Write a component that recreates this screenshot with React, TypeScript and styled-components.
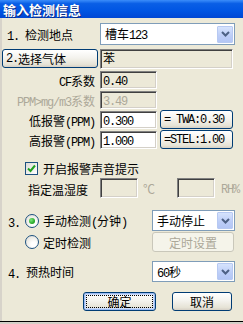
import React from 'react';
import styled, { createGlobalStyle, css } from 'styled-components';

const GlobalStyle = createGlobalStyle`
  html, body {
    margin: 0;
    padding: 0;
    background: #d4d0c8;
  }
  body {
    font-family: "Noto Sans CJK SC", "DejaVu Sans", sans-serif;
    font-size: 12px;
    color: #000;
  }
`;

// half-width latin runs, roughly SimSun metrics (6px advance)
const L = styled.span`
  font-family: "Liberation Mono", "DejaVu Sans Mono", monospace;
  font-size: 12px;
  letter-spacing: -1.2px;
`;

const Window = styled.div`
  width: 243px;
  height: 321px;
  background: #ece9d8;
  border-bottom: 1px solid #000;
  display: flex;
  flex-direction: column;
  overflow: hidden;
`;

const TitleBar = styled.div`
  height: 18px;
  flex: none;
  display: flex;
  align-items: center;
  padding-left: 3px;
  background: linear-gradient(#3b8dfa 0%, #0a5fe6 20%, #0055e3 60%, #0047d4 100%);
  color: #fff;
  font-weight: bold;
  font-size: 13px;
  text-shadow: 1px 1px 0 #0a2a84;
`;

const Body = styled.div`
  flex: 1;
  border-left: 2px solid #d7d3ca;
  display: flex;
  flex-direction: column;
`;

const Row = styled.div<{ $h: number; $mt: number }>`
  display: flex;
  align-items: center;
  height: ${(p) => p.$h}px;
  margin-top: ${(p) => p.$mt}px;
  flex: none;
`;

const Label = styled.div<{ $w?: number; $right?: boolean; $pl?: number; $disabled?: boolean }>`
  width: ${(p) => (p.$w ? `${p.$w}px` : 'auto')};
  flex: none;
  box-sizing: border-box;
  padding-left: ${(p) => p.$pl ?? 0}px;
  padding-right: ${(p) => (p.$right ? 5 : 0)}px;
  text-align: ${(p) => (p.$right ? 'right' : 'left')};
  white-space: nowrap;
  color: ${(p) => (p.$disabled ? '#aca899' : '#000')};
  padding-top: 2px;
`;

const Field = styled.div<{ $w: number; $h?: number; $white?: boolean; $disabled?: boolean; $ml?: number }>`
  width: ${(p) => p.$w}px;
  height: ${(p) => p.$h ?? 18}px;
  margin-left: ${(p) => p.$ml ?? 0}px;
  box-sizing: border-box;
  flex: none;
  border: 1px solid;
  border-color: #808080 #fff #fff #808080;
  box-shadow: inset 1px 1px 0 #404040, inset -1px -1px 0 #d4d0c8;
  background: ${(p) => (p.$white ? '#fff' : '#ece9d8')};
  color: ${(p) => (p.$disabled ? '#aca899' : '#000')};
  padding: 0 2px 0 2px;
  line-height: 15px;
  white-space: nowrap;
  overflow: hidden;
`;

const ComboBox = styled.div<{ $w: number; $h: number }>`
  width: ${(p) => p.$w}px;
  height: ${(p) => p.$h}px;
  box-sizing: border-box;
  flex: none;
  display: flex;
  align-items: center;
  border: 1px solid #7f9db9;
  background: #fff;
  padding: 1px;
`;

const ComboText = styled.div`
  flex: 1;
  padding-left: 3px;
  white-space: nowrap;
  overflow: hidden;
`;

const DropButton = styled.div`
  width: 16px;
  height: 100%;
  max-height: 17px;
  box-sizing: border-box;
  flex: none;
  display: flex;
  align-items: center;
  justify-content: center;
  border: 1px solid #b7c9f2;
  border-radius: 1px;
  background: linear-gradient(#d6e3fd, #bccdf7 60%, #b3c6f5);
`;

const xpButton = css`
  box-sizing: border-box;
  flex: none;
  border: 1px solid #003c74;
  border-radius: 3px;
  background: linear-gradient(#ffffff 0%, #f4f3ee 45%, #e6e3d6 85%, #d6d0c5 100%);
`;

const PushButton = styled.div<{ $w: number; $h: number; $left?: boolean; $disabled?: boolean; $def?: boolean; $ml?: number }>`
  ${xpButton};
  position: relative;
  width: ${(p) => p.$w}px;
  height: ${(p) => p.$h}px;
  margin-left: ${(p) => p.$ml ?? 0}px;
  display: flex;
  align-items: center;
  justify-content: ${(p) => (p.$left ? 'flex-start' : 'center')};
  padding-left: ${(p) => (p.$left ? 3 : 0)}px;
  white-space: nowrap;
  ${(p) =>
    p.$disabled &&
    css`
      border-color: #c9c7ba;
      background: #f5f4ea;
      color: #aca899;
    `}
  ${(p) =>
    p.$def &&
    css`
      box-shadow: inset 0 0 0 1px #9dbcf3, inset 0 0 0 2px #cddcf9;
      &::after {
        content: '';
        position: absolute;
        inset: 2px;
        border: 1px dotted #000;
      }
    `}
`;

const CheckBox = styled.div<{ $ml: number }>`
  width: 13px;
  height: 13px;
  box-sizing: border-box;
  flex: none;
  margin-left: ${(p) => p.$ml}px;
  border: 1px solid #1c5180;
  background: linear-gradient(135deg, #dcdcd7, #fff);
  display: flex;
  align-items: center;
  justify-content: center;
`;

const Radio = styled.div<{ $checked?: boolean }>`
  width: 14px;
  height: 14px;
  box-sizing: border-box;
  flex: none;
  border: 1px solid #1c5180;
  border-radius: 50%;
  background: radial-gradient(circle at 65% 70%, #fff 20%, #dcdad0 100%);
  display: flex;
  align-items: center;
  justify-content: center;
  &::after {
    content: '';
    display: ${(p) => (p.$checked ? 'block' : 'none')};
    width: 6px;
    height: 6px;
    border-radius: 50%;
    background: radial-gradient(circle at 35% 35%, #7be87b, #21a121 70%);
  }
`;

const Text = styled.span<{ $ml?: number; $disabled?: boolean }>`
  margin-left: ${(p) => p.$ml ?? 0}px;
  white-space: nowrap;
  color: ${(p) => (p.$disabled ? '#aca899' : '#000')};
`;

const LeftCell = styled.div<{ $w: number }>`
  width: ${(p) => p.$w}px;
  flex: none;
  display: flex;
  align-items: center;
`;

const Chevron = () => (
  <svg width="9" height="6" viewBox="0 0 9 6">
    <path d="M1 1 L4.5 4.5 L8 1" fill="none" stroke="#4d6185" strokeWidth="2" />
  </svg>
);

const Check = () => (
  <svg width="9" height="9" viewBox="0 0 9 9">
    <path d="M1 4.5 L3.5 7 L8 1.5" fill="none" stroke="#21a121" strokeWidth="2" />
  </svg>
);

const Combo: React.FC<{ w: number; h: number; children: React.ReactNode }> = ({ w, h, children }) => (
  <ComboBox $w={w} $h={h}>
    <ComboText>{children}</ComboText>
    <DropButton>
      <Chevron />
    </DropButton>
  </ComboBox>
);

export default function App() {
  return (
    <>
      <GlobalStyle />
      <Window>
        <TitleBar>输入检测信息</TitleBar>
        <Body>
          <Row $h={22} $mt={5}>
            <Label $w={98} $pl={5}><L>1. </L>检测地点</Label>
            <Combo w={135} h={22}>槽车<L>123</L></Combo>
          </Row>
          <Row $h={19} $mt={4}>
            <PushButton $w={96} $h={19} $left><L>2. </L>选择气体</PushButton>
            <Field $w={133} $h={20} $ml={2}>苯</Field>
          </Row>
          <Row $h={18} $mt={3}>
            <Label $w={98} $right><L>CF</L>系数</Label>
            <Field $w={57}><L>0.40</L></Field>
          </Row>
          <Row $h={18} $mt={2}>
            <Label $w={98} $right $disabled><L>PPM&gt;mg/m3</L>系数</Label>
            <Field $w={57} $disabled><L>3.49</L></Field>
          </Row>
          <Row $h={19} $mt={1}>
            <Label $w={98} $right>低报警<L>(PPM)</L></Label>
            <Field $w={57} $white><L>0.300</L></Field>
            <PushButton $w={73} $h={19} $ml={3} $left><L>= TWA:0.30</L></PushButton>
          </Row>
          <Row $h={19} $mt={1}>
            <Label $w={98} $right>高报警<L>(PPM)</L></Label>
            <Field $w={57} $white><L>1.000</L></Field>
            <PushButton $w={73} $h={19} $ml={3} $left><L>=STEL:1.00</L></PushButton>
          </Row>
          <Row $h={14} $mt={12}>
            <CheckBox $ml={23}>
              <Check />
            </CheckBox>
            <Text $ml={5}>开启报警声音提示</Text>
          </Row>
          <Row $h={20} $mt={3}>
            <Label $w={98} $pl={26}>指定温湿度</Label>
            <Field $w={38} $h={20} />
            <Text $ml={5} $disabled>℃</Text>
            <Field $w={38} $h={20} $ml={22} />
            <Text $ml={6} $disabled><L>RH%</L></Text>
          </Row>
          <Row $h={21} $mt={12}>
            <LeftCell $w={150}>
              <Label $w={23} $pl={6}><L>3.</L></Label>
              <Radio $checked />
              <Text $ml={4}>手动检测<L>(</L>分钟<L>)</L></Text>
            </LeftCell>
            <Combo w={83} h={21}>手动停止</Combo>
          </Row>
          <Row $h={20} $mt={1}>
            <LeftCell $w={150}>
              <Label $w={23} />
              <Radio />
              <Text $ml={4}>定时检测</Text>
            </LeftCell>
            <PushButton $w={82} $h={20} $disabled>定时设置</PushButton>
          </Row>
          <Row $h={21} $mt={9}>
            <LeftCell $w={150}>
              <Label $w={24} $pl={6}><L>4.</L></Label>
              <Text>预热时间</Text>
            </LeftCell>
            <Combo w={83} h={21}><L>60</L>秒</Combo>
          </Row>
          <Row $h={19} $mt={10}>
            <PushButton $w={73} $h={19} $ml={81} $def>确定</PushButton>
            <PushButton $w={60} $h={19} $ml={16}>取消</PushButton>
          </Row>
        </Body>
      </Window>
    </>
  );
}
